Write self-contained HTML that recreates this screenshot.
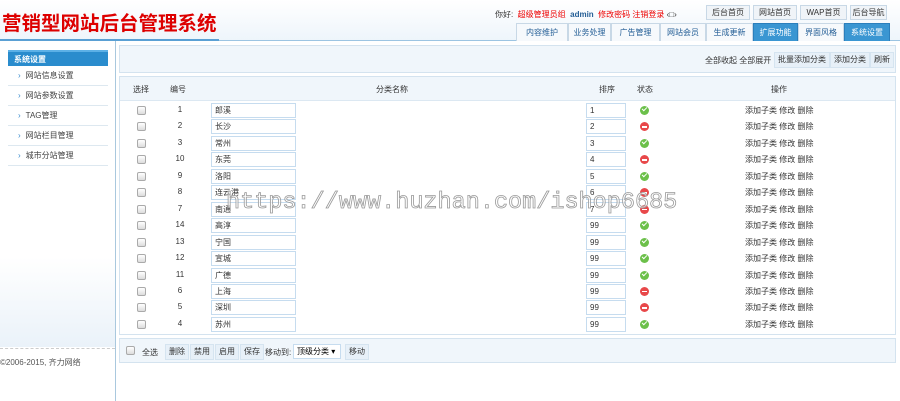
<!DOCTYPE html>
<html><head><meta charset="utf-8"><style>
*{margin:0;padding:0;box-sizing:border-box}
body{width:900px;height:401px;overflow:hidden;background:#fff;font-family:"Liberation Sans","Noto Sans CJK SC",sans-serif;font-size:8px;color:#333;position:relative}
.hdr{position:absolute;left:0;top:0;width:900px;height:41px;background:linear-gradient(#fff,#eef5fb);border-bottom:1px solid #9cc4e2}
.logo{position:absolute;left:2px;top:7px;font-size:19.5px;font-weight:bold;color:#d00}
.hl{position:absolute;left:0;top:39px;width:219px;height:2px;background:#5aa0d4}
.top{position:absolute;top:9px;left:495px;font-size:8px;white-space:nowrap}
.tb{position:absolute;top:5px;height:15px;border:1px solid #c8d8e6;background:#f0f4f8;font-size:8px;text-align:center;line-height:13px}
.tab{position:absolute;top:23px;height:18px;border:1px solid #c8d8e6;border-bottom:none;background:#f6f9fc;color:#245e96;font-size:8px;text-align:center;line-height:17px}
.tab.on{background:#3a96d2;color:#fff;border-color:#2b7fbc}
.side{position:absolute;left:0;top:41px;width:116px;height:360px;border-right:1px solid #a9c8de;background:linear-gradient(#fff 60%,#eaf2f9 85%,#fff 85%)}
.sh{position:absolute;left:8px;top:9px;width:100px;height:17px;background:#2a8ccd;color:#fff;font-size:8px;font-weight:bold;line-height:15px;padding-left:6px;border-top:2px solid #5cb0e6}
.si{position:absolute;left:8px;width:100px;height:20px;border-bottom:1px solid #dde8f0;background:#fff;font-size:8px;line-height:20px;padding-left:10px;color:#444}
.si:before{content:"›";color:#3a8ccc;margin-right:5px}
.copy{position:absolute;left:0;top:357px;font-size:8px;color:#555}
.dash{position:absolute;left:0;top:348px;width:115px;border-top:1px dashed #ccc}
.bar{position:absolute;left:119px;top:45px;width:777px;height:28px;border:1px solid #d4e3ef;background:#f0f6fb}
.btn{position:absolute;height:16px;border:1px solid #d5e4f0;background:#e7f0f8;font-size:8px;line-height:14px;padding:0 3px;color:#333}
.box{position:absolute;left:119px;top:76px;width:777px;height:259px;border:1px solid #d4e3ef}
.th{position:absolute;left:0;top:0;width:775px;height:24px;background:#f0f6fb;border-bottom:1px solid #dce8f2}
.t{position:absolute;font-size:8px}
.row{position:absolute;left:0;width:775px;height:16px}
.cb{position:absolute;left:17px;top:3px;width:9px;height:9px;border:1px solid #aaa;border-radius:2px;background:linear-gradient(#fff,#ddd)}
.id{position:absolute;left:40px;width:40px;text-align:center;top:2px}
.in{position:absolute;top:0;height:15px;border:1px solid #c6dcef;background:#fff;line-height:13px;padding-left:3px;font-size:8px}
.st{position:absolute;left:520px;top:3px;width:9px;height:9px;border-radius:50%}
.g{background:#6cc04a}.r{background:#e8484a}
.g:after{content:"";position:absolute;left:2px;top:1px;width:4px;height:2px;border-left:1.5px solid #fff;border-bottom:1.5px solid #fff;transform:rotate(-45deg)}
.r:after{content:"";position:absolute;left:2px;top:4px;width:5px;height:1.5px;background:#fff}
.op{position:absolute;left:625px;top:2px}
.foot{position:absolute;left:119px;top:338px;width:777px;height:25px;border:1px solid #d4e3ef;background:#f0f6fb}
.wm{position:absolute;left:226px;top:189px;font-family:"Liberation Mono",monospace;font-size:23.5px;color:rgba(255,255,255,0.6);-webkit-text-stroke:0.8px #999;white-space:nowrap}
</style></head><body>
<div class="hdr"><div class="logo">营销型网站后台管理系统</div><div class="hl"></div>
<div class="top">你好: &nbsp;<span style="color:#e00">超级管理员组</span> &nbsp;<b style="color:#245e96">admin</b> &nbsp;<span style="color:#e00">修改密码 注销登录</span> ‹□›</div>
<div class="tb" style="left:706px;width:44px">后台首页</div><div class="tb" style="left:753px;width:44px">网站首页</div><div class="tb" style="left:800px;width:47px">WAP首页</div><div class="tb" style="left:850px;width:37px">后台导航</div>
<div class="tab" style="left:516px;width:52px">内容维护</div><div class="tab" style="left:568px;width:43px">业务处理</div><div class="tab" style="left:611px;width:49px">广告管理</div><div class="tab" style="left:660px;width:46px">网站会员</div><div class="tab" style="left:706px;width:47px">生成更新</div><div class="tab on" style="left:753px;width:45px">扩展功能</div><div class="tab" style="left:798px;width:46px">界面风格</div><div class="tab on" style="left:844px;width:46px">系统设置</div>
</div>
<div class="side"><div class="sh">系统设置</div>
<div class="si" style="top:25px">网站信息设置</div><div class="si" style="top:45px">网站参数设置</div><div class="si" style="top:65px">TAG管理</div><div class="si" style="top:85px">网站栏目管理</div><div class="si" style="top:105px">城市分站管理</div>
<div class="dash" style="top:307px"></div></div>
<div class="copy">©2006-2015, 齐力网络</div>
<div class="bar"><span class="t" style="left:585px;top:9px">全部收起 全部展开</span>
<div class="btn" style="left:654px;top:6px">批量添加分类</div><div class="btn" style="left:710px;top:6px">添加分类</div><div class="btn" style="left:750px;top:6px">刷新</div></div>
<div class="box"><div class="th">
<span class="t" style="left:13px;top:7px">选择</span><span class="t" style="left:50px;top:7px">编号</span><span class="t" style="left:256px;top:7px">分类名称</span><span class="t" style="left:479px;top:7px">排序</span><span class="t" style="left:517px;top:7px">状态</span><span class="t" style="left:651px;top:7px">操作</span></div>
<div id="rows"></div>
</div>
<div class="foot"><div class="cb" style="left:6px;top:7px"></div><span class="t" style="left:22px;top:8px">全选</span>
<div class="btn" style="left:45px;top:5px">删除</div><div class="btn" style="left:70px;top:5px">禁用</div><div class="btn" style="left:95px;top:5px">启用</div><div class="btn" style="left:120px;top:5px">保存</div><span class="t" style="left:145px;top:8px">移动到:</span>
<div class="in" style="left:173px;top:5px;width:48px;color:#000">顶级分类 ▾</div><div class="btn" style="left:225px;top:5px">移动</div></div>
<script>
var d=[[1,"郎溪",1,"g"],[2,"长沙",2,"r"],[3,"常州",3,"g"],[10,"东莞",4,"r"],[9,"洛阳",5,"g"],[8,"连云港",6,"r"],[7,"南通",7,"r"],[14,"高淳",99,"g"],[13,"宁国",99,"g"],[12,"宣城",99,"g"],[11,"广德",99,"g"],[6,"上海",99,"r"],[5,"深圳",99,"r"],[4,"苏州",99,"g"]];
var h="";d.forEach(function(r,i){h+='<div class="row" style="top:'+(26+i*16.45)+'px"><div class="cb"></div><div class="id">'+r[0]+'</div><div class="in" style="left:91px;width:85px">'+r[1]+'</div><div class="in" style="left:466px;width:40px">'+r[2]+'</div><div class="st '+r[3]+'"></div><div class="op">添加子类 修改 删除</div></div>'});
document.getElementById("rows").outerHTML=h;
</script>
<div class="wm">https://www.huzhan.com/ishop6685</div>
</body></html>
